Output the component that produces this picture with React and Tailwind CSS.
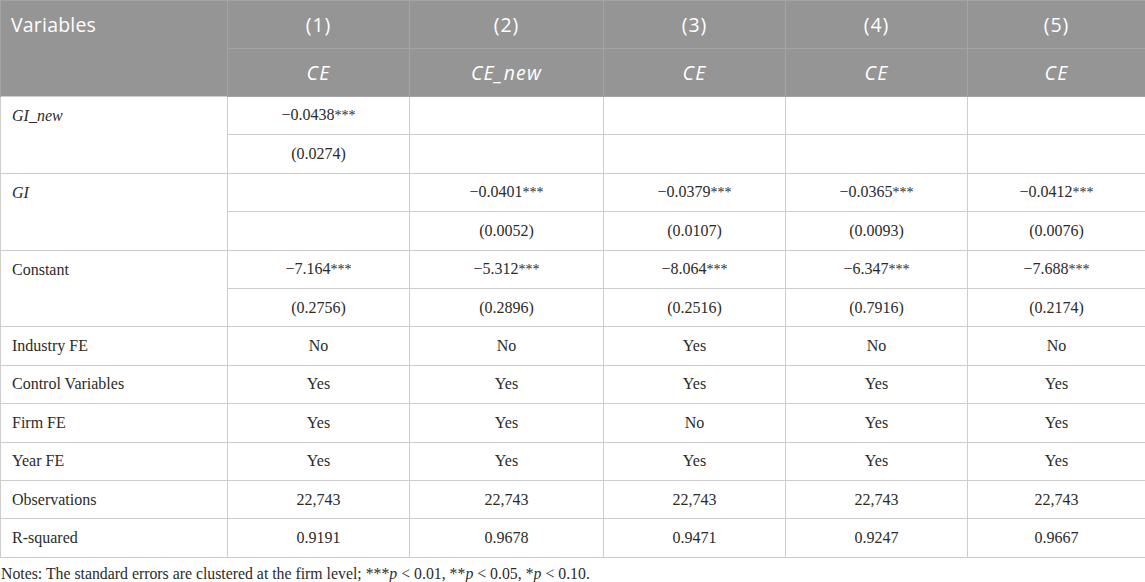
import React from 'react';

const rows = [
  { label: 'GI_new', italic: true, coef: ['−0.0438***', '', '', '', ''], se: ['(0.0274)', '', '', '', ''] },
  { label: 'GI', italic: true, coef: ['', '−0.0401***', '−0.0379***', '−0.0365***', '−0.0412***'], se: ['', '(0.0052)', '(0.0107)', '(0.0093)', '(0.0076)'] },
  { label: 'Constant', italic: false, coef: ['−7.164***', '−5.312***', '−8.064***', '−6.347***', '−7.688***'], se: ['(0.2756)', '(0.2896)', '(0.2516)', '(0.7916)', '(0.2174)'] },
];

const single = [
  ['Industry FE', 'No', 'No', 'Yes', 'No', 'No'],
  ['Control Variables', 'Yes', 'Yes', 'Yes', 'Yes', 'Yes'],
  ['Firm FE', 'Yes', 'Yes', 'No', 'Yes', 'Yes'],
  ['Year FE', 'Yes', 'Yes', 'Yes', 'Yes', 'Yes'],
  ['Observations', '22,743', '22,743', '22,743', '22,743', '22,743'],
  ['R-squared', '0.9191', '0.9678', '0.9471', '0.9247', '0.9667'],
];

const Value = ({ text }) => {
  const stars = text.match(/\*+$/);
  if (!stars) return text;
  return (
    <>
      {text.slice(0, text.length - stars[0].length)}
      <span className="text-[14px]">{stars[0]}</span>
    </>
  );
};

const App = () => {
  const head = "border border-[#a4a4a4] text-white text-[19.5px] font-normal text-center align-middle";
  const cell = "border border-[#cdcdcd] text-center align-middle h-[38.4px] p-0";

  return (
    <div className="w-[1145px] h-[582px] bg-white text-[#2b2b2b] font-['Liberation_Serif',serif]">
      <table className="table-fixed border-collapse w-[1145px] text-[16px] leading-6">
        <colgroup>
          <col className="w-[227px]" />
          <col className="w-[182px]" />
          <col className="w-[194px]" />
          <col className="w-[182px]" />
          <col className="w-[182px]" />
          <col className="w-[178px]" />
        </colgroup>
        <thead className="bg-[#959595] font-['Open_Sans',sans-serif]">
          <tr className="h-[48px]">
            <th rowSpan={2} className={head + " text-left align-top pl-[10px] pt-[12px] tracking-[0.01em] border-b-0"}>Variables</th>
            {['(1)', '(2)', '(3)', '(4)', '(5)'].map((c) => (
              <th key={c} className={head + " tracking-[0.05em]"}>{c}</th>
            ))}
          </tr>
          <tr className="h-[48px]">
            {['CE', 'CE_new', 'CE', 'CE', 'CE'].map((c, i) => (
              <th key={i} className={head + " italic tracking-[0.06em]"}>{c}</th>
            ))}
          </tr>
        </thead>
        <tbody>
          {rows.map((r) => (
            <React.Fragment key={r.label}>
              <tr>
                <td rowSpan={2} className={"border border-[#cdcdcd] align-top text-left pl-[11px] pt-[7px] " + (r.italic ? 'italic' : '')}>
                  {r.label}
                </td>
                {r.coef.map((v, i) => (
                  <td key={i} className={cell}><Value text={v} /></td>
                ))}
              </tr>
              <tr>
                {r.se.map((v, i) => (
                  <td key={i} className={cell}>{v}</td>
                ))}
              </tr>
            </React.Fragment>
          ))}
          {single.map((r) => (
            <tr key={r[0]}>
              <td className={cell + " text-left pl-[11px]"}>{r[0]}</td>
              {r.slice(1).map((v, i) => (
                <td key={i} className={cell}>{v}</td>
              ))}
            </tr>
          ))}
        </tbody>
      </table>
      <p className="text-[15.8px] leading-5 mt-[6px] pl-[1px]">
        Notes: The standard errors are clustered at the firm level; ***<i>p</i> &lt; 0.01, **<i>p</i> &lt; 0.05, *<i>p</i> &lt; 0.10.
      </p>
    </div>
  );
};

export default App;
